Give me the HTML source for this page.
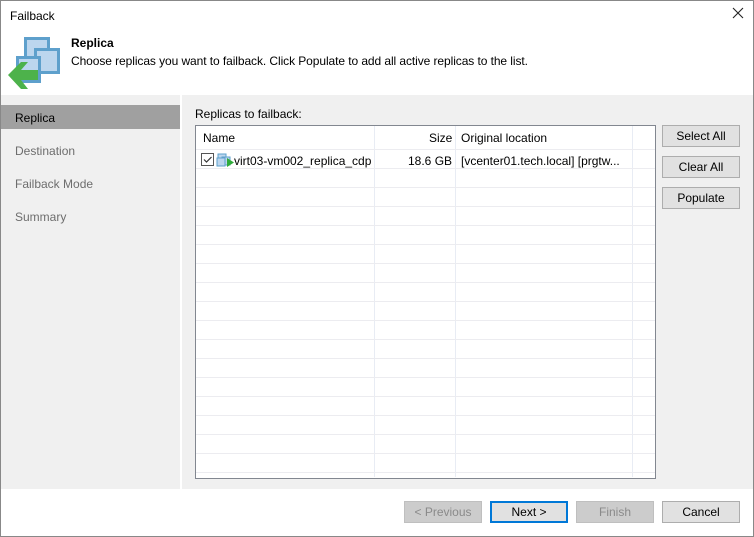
<!DOCTYPE html>
<html><head><style>
*{box-sizing:border-box;margin:0;padding:0}
body{width:754px;height:537px;font-family:"Liberation Sans",sans-serif;font-size:12px;color:#000;background:#fff;position:relative;overflow:hidden}
.win{position:absolute;left:0;top:0;width:754px;height:537px;border:1px solid #888}
.abs{position:absolute}
.btn{position:absolute;height:22px;width:78px;background:#e1e1e1;border:1px solid #adadad;text-align:center;line-height:20px;font-size:12px}
.dis{background:#ccc;border-color:#bfbfbf;color:#8a8a8a}
.nav{position:absolute;left:14px;font-size:12px;color:#6d6d6d}
.row{position:absolute;left:0;width:459px;height:1px;background:#ececf0}
.col{position:absolute;top:0;width:1px;height:351px;background:#e8ecf4}
</style></head><body>
<div class="win">
<div class="abs" style="left:9px;top:8px">Failback</div>
<svg class="abs" style="left:731px;top:6px" width="12" height="12"><path d="M1 1L11 11M11 1L1 11" stroke="#222" stroke-width="1.1"/></svg>
<svg class="abs" style="left:0;top:0" width="64" height="92">
<rect x="24.5" y="37.5" width="23" height="23" fill="#bcd6ee" stroke="#5ea0cc" stroke-width="3"/>
<rect x="34.5" y="48.5" width="23" height="23" fill="#bcd6ee" stroke="#5ea0cc" stroke-width="3"/>
<rect x="16.5" y="56.5" width="22" height="24" fill="#bcd6ee" stroke="#5ea0cc" stroke-width="3"/>
<polygon points="7,74 20,61 27,61 20,69 37,69 37,79 20,79 27,88 20,88" fill="#4db24b"/>
</svg>
<div class="abs" style="left:70px;top:35px;font-weight:bold">Replica</div>
<div class="abs" style="left:70px;top:53px;letter-spacing:-0.08px">Choose replicas you want to failback. Click Populate to add all active replicas to the list.</div>
<div class="abs" style="left:0;top:94px;width:752px;height:394px;background:#f0f0f0"></div>
<div class="abs" style="left:179px;top:94px;width:2px;height:394px;background:#fff"></div>
<div class="abs" style="left:0;top:104px;width:179px;height:24px;background:#a0a0a0"></div>
<div class="abs" style="left:14px;top:110px">Replica</div>
<div class="nav" style="top:143px">Destination</div>
<div class="nav" style="top:176px">Failback Mode</div>
<div class="nav" style="top:209px">Summary</div>
<div class="abs" style="left:194px;top:106px">Replicas to failback:</div>
<div class="abs" style="left:194px;top:124px;width:461px;height:354px;background:#fff;border:1px solid #828790">
 <div class="col" style="left:178px"></div><div class="col" style="left:259px"></div><div class="col" style="left:436px"></div>
 <div class="abs" style="left:7px;top:5px">Name</div>
 <div class="abs" style="left:233px;top:5px">Size</div>
 <div class="abs" style="left:265px;top:5px">Original location</div>
 <div class="row" style="top:23px"></div>
 <svg class="abs" style="left:5px;top:27px" width="36" height="14"><rect x="0.5" y="0.5" width="12" height="12" fill="#fff" stroke="#555"/><path d="M3 6.5l2.5 2.5 5-5" fill="none" stroke="#333" stroke-width="1.2"/>
 <rect x="17" y="1" width="8" height="8" fill="#bcd6ee" stroke="#5ea0cc"/><rect x="21" y="4" width="8" height="8" fill="#bcd6ee" stroke="#5ea0cc"/><rect x="16" y="5" width="8" height="8" fill="#bcd6ee" stroke="#5ea0cc"/><polygon points="26,5 33,9.5 26,14" fill="#2eaa3a"/></svg>
 <div class="abs" style="left:38px;top:28px">virt03-vm002_replica_cdp</div>
 <div class="abs" style="left:212px;top:28px">18.6 GB</div>
 <div class="abs" style="left:265px;top:28px">[vcenter01.tech.local] [prgtw...</div>
 <div class="row" style="top:42px"></div><div class="row" style="top:61px"></div><div class="row" style="top:80px"></div><div class="row" style="top:99px"></div><div class="row" style="top:118px"></div><div class="row" style="top:137px"></div><div class="row" style="top:156px"></div><div class="row" style="top:175px"></div><div class="row" style="top:194px"></div><div class="row" style="top:213px"></div><div class="row" style="top:232px"></div><div class="row" style="top:251px"></div><div class="row" style="top:270px"></div><div class="row" style="top:289px"></div><div class="row" style="top:308px"></div><div class="row" style="top:327px"></div><div class="row" style="top:346px"></div>
</div>
<div class="btn" style="left:661px;top:124px">Select All</div>
<div class="btn" style="left:661px;top:155px">Clear All</div>
<div class="btn" style="left:661px;top:186px">Populate</div>
<div class="abs" style="left:0;top:488px;width:752px;height:1px;background:#fff"></div>
<div class="btn dis" style="left:403px;top:500px">&lt; Previous</div>
<div class="btn" style="left:489px;top:500px;border:2px solid #0078d7;line-height:18px">Next &gt;</div>
<div class="btn dis" style="left:575px;top:500px">Finish</div>
<div class="btn" style="left:661px;top:500px">Cancel</div>
</div>
</body></html>
